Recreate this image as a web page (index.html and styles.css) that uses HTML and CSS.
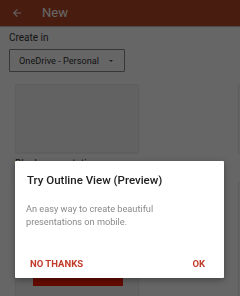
FILE: index.html
```html
<!DOCTYPE html>
<html>
<head>
<meta charset="utf-8">
<link rel="stylesheet" href="styles.css">
</head>
<body>
<div class="page">
  <header class="appbar">
    <svg class="back" width="12" height="12" viewBox="0 0 24 24"><path d="M20 11H7.83l5.59-5.59L12 4l-8 8 8 8 1.41-1.41L7.83 13H20v-2z" fill="#fff"/></svg>
    <span class="title">New</span>
  </header>
  <main class="content">
    <div class="label">Create in</div>
    <div class="select">
      <span>OneDrive - Personal</span>
      <span class="caret"></span>
    </div>
    <div class="grid">
      <div class="item">
        <div class="card"></div>
        <div class="name">Blank presentation</div>
      </div>
      <div class="item">
        <div class="card"></div>
      </div>
    </div>
    <div class="grid second">
      <div class="item">
        <div class="card tall"><div class="redbar"></div></div>
      </div>
      <div class="item">
        <div class="card tall"></div>
      </div>
    </div>
  </main>
</div>
<div class="scrim"></div>
<div class="dialog">
  <div class="dtitle">Try Outline View (Preview)</div>
  <div class="dbody">An easy way to create beautiful presentations on mobile.</div>
  <div class="actions">
    <span class="btn">NO THANKS</span>
    <span class="btn">OK</span>
  </div>
</div>
</body>
</html>
```
FILE: styles.css
```css
html, body {
  margin: 0;
  padding: 0;
}
body {
  width: 240px;
  height: 296px;
  overflow: hidden;
  background: #fff;
  font-family: Roboto, "Noto Sans", sans-serif;
}
.page {
  width: 240px;
  height: 296px;
  overflow: hidden;
}
.appbar {
  height: 26px;
  background: #B7472A;
  display: flex;
  align-items: center;
  box-shadow: 0 1px 1px rgba(0,0,0,0.25);
}
.back {
  margin-left: 11px;
}
.title {
  color: #fff;
  font-size: 13px;
  margin-left: 19px;
  line-height: 26px;
}
.content {
  padding: 6px 9px 0 9px;
}
.label {
  font-size: 10px;
  color: #333;
  line-height: 12px;
}
.select {
  margin-top: 5px;
  height: 21px;
  border: 1px solid #8a8a8a;
  border-radius: 1px;
  display: flex;
  align-items: center;
  justify-content: space-between;
  padding: 0 11px 0 9px;
  box-sizing: content-box;
  width: 94px;
  font-size: 9.2px;
  color: #333;
}
.caret {
  width: 0;
  height: 0;
  border-left: 2px solid transparent;
  border-right: 2px solid transparent;
  border-top: 2.5px solid #555;
}
.grid {
  display: flex;
  gap: 99px;
  margin-top: 12px;
  margin-left: 6px;
}
.grid.second {
  margin-top: 12px;
}
.item {
  width: 124px;
  flex: none;
}
.card {
  height: 69px;
  background: #f6f6f6;
  border: 1px solid #ececec;
  box-sizing: border-box;
  border-radius: 2px;
  box-shadow: 0 1px 2px rgba(0,0,0,0.08);
}
.card.tall {
  height: 120px;
  padding-top: 83px;
  box-sizing: border-box;
}
.redbar {
  margin-left: 17px;
  width: 90px;
  height: 20px;
  background: #fc1c04;
}
.name {
  font-size: 10px;
  color: #333;
  margin-top: 5px;
  line-height: 12px;
}
.scrim {
  position: fixed;
  left: 0;
  top: 0;
  width: 240px;
  height: 296px;
  background: rgba(0,0,0,0.6);
}
.dialog {
  position: absolute;
  left: 15px;
  top: 161px;
  width: 209px;
  height: 117px;
  background: #fff;
  box-sizing: border-box;
  padding: 11px 12px 0 11px;
  box-shadow: 0 2px 6px rgba(0,0,0,0.35);
  border-radius: 1px;
}
.dtitle {
  font-size: 11.5px;
  font-weight: 500;
  color: #212121;
  line-height: 16px;
  margin-left: 1px;
}
.dbody {
  margin-top: 14px;
  font-size: 9.2px;
  line-height: 13px;
  color: #8a8a8a;
  width: 150px;
}
.actions {
  display: flex;
  justify-content: space-between;
  margin-top: 30px;
  padding: 0 7px 0 4px;
}
.btn {
  font-size: 9.5px;
  font-weight: 700;
  color: #C23B2A;
  line-height: 12px;
}
```
